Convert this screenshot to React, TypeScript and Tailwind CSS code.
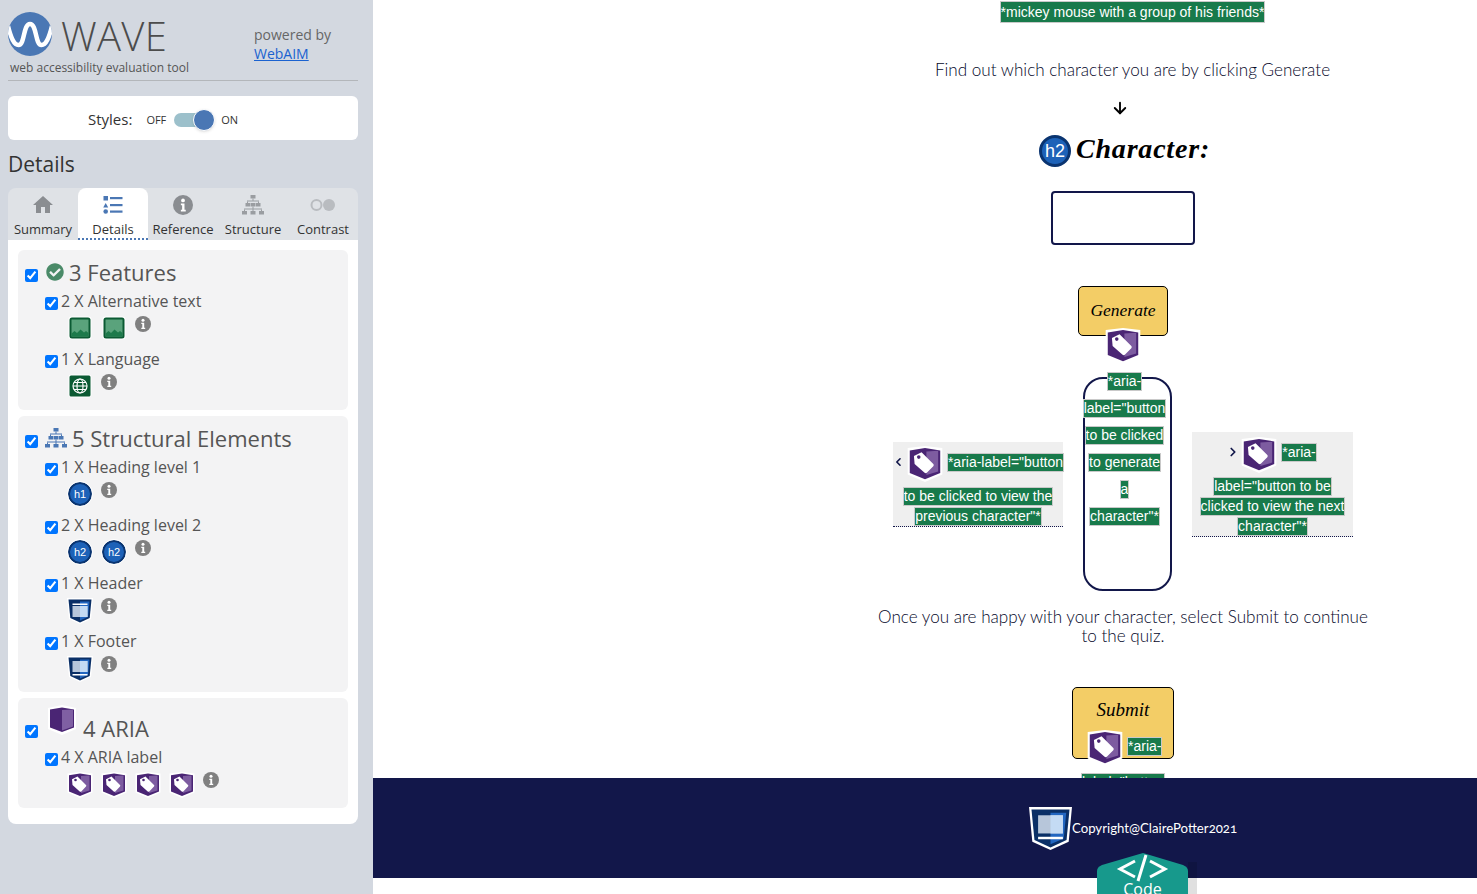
import type { ReactNode } from "react";
import { ArrowDown, ChevronLeft, ChevronRight } from "lucide-react";
import { FaCheckCircle } from "react-icons/fa";
import { MdHome } from "react-icons/md";

const ARIAL = "font-['Liberation_Sans',Arial,sans-serif]";

function AltIcon() {
  return (
    <svg width="24" height="24" viewBox="0 0 24 24">
      <rect x="0.5" y="0.5" width="23" height="23" rx="3" fill="#fff" />
      <rect x="1.5" y="1.5" width="21" height="21" rx="2.5" fill="#0b5a33" />
      <rect x="3.5" y="3.5" width="17" height="17" fill="#5aa37c" />
      <path d="M3.5 20.5v-3l3-2.5 2.5 2 3.500-3.500 3.500 3 2-1.500 2.500 2v3.500z" fill="#1d7a4b" />
    </svg>
  );
}

function LangIcon() {
  return (
    <svg width="24" height="24" viewBox="0 0 24 24">
      <rect x="0.5" y="0.5" width="23" height="23" rx="3" fill="#fff" />
      <rect x="1.5" y="1.5" width="21" height="21" rx="1.5" fill="#0b5a33" />
      <g fill="none" stroke="#fff" strokeWidth="1.2">
        <circle cx="12" cy="12" r="7" />
        <ellipse cx="12" cy="12" rx="3" ry="7" />
        <path d="M5 12h14M6 8.500h12M6 15.500h12" />
      </g>
    </svg>
  );
}

function HeadingIcon({ level, size = 24 }: { level: string; size?: number }) {
  const big = size > 24;
  return (
    <span
      className={`${ARIAL} flex shrink-0 items-center justify-center rounded-full bg-[#1d62b8] text-white ${
        big
          ? "h-[32px] w-[32px] border-[3px] border-[#0a3470] text-[18px]"
          : "h-[24px] w-[24px] border-[2px] border-[#0a3470] text-[11px] outline outline-1 outline-white"
      }`}
    >
      {level}
    </span>
  );
}

function LandmarkIcon({ footer, w = 26, h = 26 }: { footer?: boolean; w?: number; h?: number }) {
  return (
    <svg width={w} height={h} viewBox="0 0 26 26" className="shrink-0">
      <path d="M0 0h26l-2 21-11 5-11-5z" fill="#fff" />
      <path d="M1.500 1.500h23l-1.800 18.500-9.700 4.500-9.700-4.500z" fill="#0a2f66" />
      <path d="M13 3.500h9.500l-1.500 15.500-8 3.500z" fill="#2266c0" />
      <rect x="5.500" y={footer ? 5 : 8} width="15" height="11" fill="#b7c6da" />
      <rect x="13" y={footer ? 5 : 8} width="7.500" height="11" fill="#c4dbf4" />
      <rect x="5.500" y={footer ? 18 : 5.500} width="15" height="1.500" fill="#fff" />
    </svg>
  );
}

function AriaLabelIcon({ w = 26, h = 26 }: { w?: number; h?: number }) {
  return (
    <svg width={w} height={h} viewBox="0 0 26 26" className="shrink-0">
      <path d="M0.500 1.500 13 0l12.500 1.500v19L13 26 .5 20.500z" fill="#fff" />
      <path d="M2 3.200 13 1.500l11 1.700v16.300L13 24 2 19.500z" fill="#4a2574" />
      <path d="M14 4l8.500-.5v15L14 21z" fill="#7d5ca0" />
      <path d="M5 7.200 10.500 4.500l8.500 8.500a1.200 1.200 0 0 1 0 1.600l-4.700 4.800a1.200 1.200 0 0 1-1.600 0L5.500 13z" fill="#fff" />
      <circle cx="8.500" cy="8" r="1.300" fill="#4a2574" />
    </svg>
  );
}

function AriaGroupIcon() {
  return (
    <svg width="30" height="30" viewBox="0 0 30 30" className="shrink-0">
      <path d="M1 3 15 0l14 3v21l-14 6-14-6z" fill="#fff" />
      <path d="M3 4.500 15 2.500l12 2v18L15 27 3 22.500z" fill="#4a2574" />
      <path d="M15 5l11-.5v17L15 25.500z" fill="#7f5fa3" />
    </svg>
  );
}

function SitemapIcon({ className }: { className: string }) {
  return (
    <svg width="22" height="20" viewBox="0 0 22 20" fill="currentColor" className={className}>
      <rect x="8.500" y="0" width="5" height="3.500" />
      <rect x="10.500" y="3.500" width="1" height="2.500" />
      <rect x="5" y="5.500" width="12" height="1" />
      <rect x="5" y="6.500" width="1" height="1.500" />
      <rect x="16" y="6.500" width="1" height="1.500" />
      <rect x="3.500" y="8" width="4.500" height="3.500" />
      <rect x="14" y="8" width="4.500" height="3.500" />
      <rect x="8.500" y="8" width="5" height="3.500" />
      <rect x="2" y="13.500" width="18" height="1" />
      <rect x="2" y="14.500" width="1" height="1.500" />
      <rect x="10.500" y="11.500" width="1" height="4.500" />
      <rect x="19" y="14.500" width="1" height="1.500" />
      <rect x="0" y="16" width="5" height="3.500" />
      <rect x="8.500" y="16" width="5" height="3.500" />
      <rect x="17" y="16" width="5" height="3.500" />
    </svg>
  );
}

function InfoIcon({ size = 16, color = "#808080" }: { size?: number; color?: string }) {
  return (
    <svg width={size} height={size} viewBox="0 0 16 16" className="shrink-0">
      <circle cx="8" cy="8" r="8" fill={color} />
      <circle cx="8" cy="4.300" r="1.500" fill="#fff" />
      <path d="M6.300 6.800h2.900v5h1v1.300H6.300v-1.300h1v-3.700h-1z" fill="#fff" />
    </svg>
  );
}

function Check() {
  return <input type="checkbox" checked readOnly className="m-0 h-[13px] w-[13px] shrink-0" />;
}

function Item({ label, icons }: { label: string; icons: ReactNode }) {
  return (
    <div className="pl-[27px]">
      <div className="flex h-[22px] items-center gap-[3px] text-[16px] text-[#555]">
        <span className="mt-[5px] flex">
          <Check />
        </span>
        <span>{label}</span>
      </div>
      <div className="flex h-[36px] items-start pl-[23px] pt-[4px]">
        <div className="flex gap-[10px]">{icons}</div>
        <span className="ml-[9px]">
          <InfoIcon />
        </span>
      </div>
    </div>
  );
}

function ShieldSlot({ children }: { children: ReactNode }) {
  return <span className="-mx-[1px] flex">{children}</span>;
}

function Tab({ label, icon, active }: { label: string; icon: ReactNode; active?: boolean }) {
  return (
    <div
      className={`flex w-[70px] flex-col items-center rounded-t-lg pt-[5px] ${
        active ? "border-b-2 border-dotted border-[#4a77b4] bg-white" : ""
      }`}
    >
      <div className="flex h-[24px] items-center">{icon}</div>
      <span className="mt-[3px] whitespace-nowrap text-[13px] leading-[18px] text-[#333]">{label}</span>
    </div>
  );
}

function Sidebar() {
  return (
    <aside className="flex h-[894px] w-[373px] shrink-0 flex-col bg-[#d3d8e0] pl-[8px] pr-[15px] font-['Open_Sans',sans-serif]">
      <header className="flex h-[81px] border-b border-[#b3b6ba] pt-[12px]">
        <div className="w-[246px]">
          <div className="flex h-[44px] items-center gap-[9px]">
            <svg width="44" height="44" viewBox="0 0 44 44">
              <clipPath id="wave-clip">
                <circle cx="22" cy="22" r="22" />
              </clipPath>
              <circle cx="22" cy="22" r="22" fill="#4a77b4" />
              <path
                d="M0 14C3 26 6 33 10.500 33 17 33 15 12 22 12 29 12 27 33 33.500 33 38 33 41 26 44 14"
                fill="none"
                stroke="#fff"
                strokeWidth="4.500"
                clipPath="url(#wave-clip)"
              />
            </svg>
            <span className="mt-[4px] text-[40px] font-light leading-[34px] tracking-[0.3px] text-[#4c4c4c]">WAVE</span>
          </div>
          <p className="ml-[2px] mt-[3px] whitespace-nowrap text-[12px] leading-[18px] text-[#555]">
            web accessibility evaluation tool
          </p>
        </div>
        <div className="pt-[13px] text-[14px] leading-[19px] text-[#666]">
          <p>powered by</p>
          <a href="#webaim" className="text-[#1a62d0] underline">
            WebAIM
          </a>
        </div>
      </header>

      <div className="mt-[15px] flex h-[44px] items-center rounded-md bg-white pl-[80px] pt-[4px] text-[#333]">
        <span className="-mt-[1px] text-[15px]">Styles:</span>
        <span className="ml-[14px] text-[11px]">OFF</span>
        <span className="relative ml-[8px] h-[14px] w-[38px] rounded-full bg-[#9cc0cb]">
          <span className="absolute right-[-3px] top-[-4px] h-[22px] w-[22px] rounded-full border border-white bg-[#4a77b4] shadow" />
        </span>
        <span className="ml-[9px] text-[11px]">ON</span>
      </div>

      <h2 className="flex h-[48px] items-center pt-[2px] text-[21px] text-[#333]">Details</h2>

      <div className="flex h-[52px] rounded-t-lg bg-[#dfe2e6]">
        <Tab label="Summary" icon={<MdHome size={24} className="text-[#8a8d91]" />} />
        <Tab
          active
          label="Details"
          icon={
            <svg width="20" height="20" viewBox="0 0 20 20" fill="#4a77b4">
              <rect x="0.500" y="1" width="4.500" height="4.500" />
              <path d="M2.700 8l2.500 4.500H.2z" />
              <circle cx="2.700" cy="16.500" r="2.300" />
              <rect x="7" y="2" width="12.500" height="2.200" />
              <rect x="7" y="9" width="12.500" height="2.200" />
              <rect x="7" y="15.500" width="12.500" height="2.200" />
            </svg>
          }
        />
        <Tab label="Reference" icon={<InfoIcon size={20} color="#8a8d91" />} />
        <Tab label="Structure" icon={<SitemapIcon className="text-[#9a9da1]" />} />
        <Tab
          label="Contrast"
          icon={
            <svg width="26" height="14" viewBox="0 0 26 14">
              <circle cx="6.500" cy="7" r="5" fill="none" stroke="#b9bcc0" strokeWidth="2" />
              <circle cx="19" cy="7" r="6" fill="#b9bcc0" />
            </svg>
          }
        />
      </div>

      <div className="flex flex-col gap-[6px] rounded-b-lg bg-white px-[10px] pb-[16px] pt-[10px]">
        <section className="rounded-md bg-[#f3f3f4] pb-[4px]">
          <div className="flex h-[40px] items-center pl-[7px] pt-[4px]">
            <span className="mt-[6px] flex">
              <Check />
            </span>
            <FaCheckCircle size={18} className="ml-[8px] text-[#4a8a68]" />
            <h3 className="ml-[5px] text-[22px] text-[#555]">3 Features</h3>
          </div>
          <Item
            label="2 X Alternative text"
            icons={
              <>
                <AltIcon />
                <AltIcon />
              </>
            }
          />
          <Item label="1 X Language" icons={<LangIcon />} />
        </section>

        <section className="rounded-md bg-[#f3f3f4] pb-[4px]">
          <div className="flex h-[40px] items-center pl-[7px] pt-[4px]">
            <span className="mt-[6px] flex">
              <Check />
            </span>
            <SitemapIcon className="ml-[7px] text-[#4a77b4]" />
            <h3 className="ml-[5px] text-[22px] text-[#555]">5 Structural Elements</h3>
          </div>
          <Item label="1 X Heading level 1" icons={<HeadingIcon level="h1" />} />
          <Item
            label="2 X Heading level 2"
            icons={
              <>
                <HeadingIcon level="h2" />
                <HeadingIcon level="h2" />
              </>
            }
          />
          <Item
            label="1 X Header"
            icons={
              <ShieldSlot>
                <LandmarkIcon />
              </ShieldSlot>
            }
          />
          <Item
            label="1 X Footer"
            icons={
              <ShieldSlot>
                <LandmarkIcon footer />
              </ShieldSlot>
            }
          />
        </section>

        <section className="rounded-md bg-[#f3f3f4] pb-[4px]">
          <div className="flex h-[48px] items-center pl-[7px] pt-[12px]">
            <span className="mt-[6px] flex">
              <Check />
            </span>
            <span className="mb-[16px] ml-[9px]">
              <AriaGroupIcon />
            </span>
            <h3 className="ml-[6px] text-[22px] text-[#555]">4 ARIA</h3>
          </div>
          <Item
            label="4 X ARIA label"
            icons={
              <>
                <ShieldSlot>
                  <AriaLabelIcon />
                </ShieldSlot>
                <ShieldSlot>
                  <AriaLabelIcon />
                </ShieldSlot>
                <ShieldSlot>
                  <AriaLabelIcon />
                </ShieldSlot>
                <ShieldSlot>
                  <AriaLabelIcon />
                </ShieldSlot>
              </>
            }
          />
        </section>
      </div>
    </aside>
  );
}

function Hl({ children }: { children: ReactNode }) {
  return (
    <span className="block whitespace-nowrap bg-[#187a4b] text-[14px] leading-[17px] text-white outline outline-1 outline-[#c9c9c9]">
      {children}
    </span>
  );
}

function CenterLines({ lines, step }: { lines: string[]; step: string }) {
  return (
    <div className={`flex flex-col items-center ${step}`}>
      {lines.map((line, i) => (
        <div key={i} className="flex h-[17px] items-center">
          <Hl>{line}</Hl>
        </div>
      ))}
    </div>
  );
}

function Main() {
  return (
    <main className="relative flex h-[894px] min-w-0 flex-1 flex-col overflow-hidden bg-white">
      <div className={`${ARIAL} h-[778px] shrink-0 overflow-hidden`}>
        <div className="ml-[505px] flex w-[490px] flex-col items-center">
          <div className="mt-[2px] pl-[19px]">
            <span className="block whitespace-nowrap bg-[#187a4b] text-[14px] leading-[20px] text-white outline outline-1 outline-[#c9c9c9]">
              *mickey mouse with a group of his friends*
            </span>
          </div>

          <p className="mt-[38px] pl-[19px] font-['Lato',sans-serif] text-[17.1px] font-light leading-[20px] text-[#05072a]">
            Find out which character you are by clicking Generate
          </p>

          <ArrowDown size={18} strokeWidth={2.5} className="ml-[-6px] mt-[19px] text-black" />

          <div className="mt-[18px] flex items-center pl-[3px]">
            <HeadingIcon level="h2" size={32} />
            <h2 className="ml-[5px] -mt-[4px] font-['Liberation_Serif',serif] text-[28px] font-bold italic leading-[34px] tracking-[0.8px] text-black">
              Character:
            </h2>
          </div>

          <div className="mt-[24px] h-[54px] w-[144px] rounded-[4px] border-2 border-[#12174a]" />

          <div className="relative mt-[41px] flex h-[50px] w-[90px] items-center justify-center rounded-[5px] border border-black bg-[#f3cd66] font-['Liberation_Serif',serif] text-[17.5px] italic text-black">
            <span className="-mt-[2px]">Generate</span>
            <span className="absolute left-[26px] top-[40px]">
              <AriaLabelIcon w={36} h={38} />
            </span>
          </div>

          <div className="mt-[41px] flex items-center gap-[20px]">
            <div className="h-[85px] w-[170px] border-b border-dotted border-[#12174a] bg-[#efefef]">
              <div className="flex h-[40px] items-center pt-[1px]">
                <ChevronLeft size={14} strokeWidth={3} className="-ml-[1px] text-[#12174a]" />
                <span className="ml-[2px] mt-[3px]">
                  <AriaLabelIcon w={36} h={36} />
                </span>
                <span className="ml-[5px]">
                  <Hl>*aria-label="button</Hl>
                </span>
              </div>
              <CenterLines lines={["to be clicked to view the", "previous character\"*"]} step="mt-[6px] gap-[3px]" />
            </div>

            <div className="h-[214px] w-[89px] rounded-[20px] border-2 border-[#12174a] pr-[6px]">
              <CenterLines
                lines={['*aria-', 'label="button', "to be clicked", "to generate", "a", 'character"*']}
                step="mt-[-6px] gap-[10px]"
              />
            </div>

            <div className="h-[105px] w-[161px] border-b border-dotted border-[#12174a] bg-[#efefef]">
              <div className="flex h-[40px] items-center justify-center">
                <ChevronRight size={14} strokeWidth={3} className="-translate-x-[3px] text-[#12174a]" />
                <span className="ml-[-2px] mt-[6px]">
                  <AriaLabelIcon w={36} h={38} />
                </span>
                <span className="ml-[5px] mt-[2px]">
                  <Hl>*aria-</Hl>
                </span>
              </div>
              <CenterLines
                lines={['label="button to be', "clicked to view the next", 'character"*']}
                step="mt-[6px] gap-[3px]"
              />
            </div>
          </div>

          <p className="mt-[16px] text-center font-['Lato',sans-serif] text-[17.1px] font-light leading-[19px] text-[#05072a]">
            Once you are happy with your character, select Submit to continue
            <br />
            to the quiz.
          </p>

          <div className="relative mt-[42px] h-[72px] w-[102px] rounded-[5px] border border-black bg-[#f3cd66] text-center font-['Liberation_Serif',serif] text-[19px] italic text-black">
            <span className="mt-[9px] block leading-[26px]">Submit</span>
            <span className="absolute left-[14px] top-[41px] flex items-center gap-[5px] not-italic">
              <AriaLabelIcon w={36} h={38} />
              <span className={`${ARIAL} -mt-[4px] flex`}>
                <Hl>*aria-</Hl>
              </span>
            </span>
            <span className={`${ARIAL} absolute left-[9px] top-[86px] flex not-italic`}>
              <Hl>label="button</Hl>
            </span>
          </div>
        </div>
      </div>

      <footer className="flex h-[100px] shrink-0 items-center bg-[#12174a] pl-[656px]">
        <LandmarkIcon footer w={43} h={43} />
        <span className="mt-[2px] font-['Lato',sans-serif] text-[13.2px] text-white [font-variant-numeric:oldstyle-nums]">
          Copyright@ClairePotter2021
        </span>
      </footer>

      <div className="absolute left-[724px] top-[853px] h-[41px] w-[91px] shadow-[9px_9px_0_0_rgba(0,0,0,0.12)]">
        <svg width="91" height="41" viewBox="0 0 91 41" className="absolute inset-0">
          <path d="M0 18Q0 14 5 12L46 0l40 12q5 2 5 6v23H0z" fill="#17998c" />
          <g fill="none" stroke="#fff" strokeWidth="3">
            <path d="M38 8 23 16l15 8M53 8l15 8-15 8M49 2 41 28" />
          </g>
        </svg>
        <span className="absolute left-0 right-0 top-[26px] text-center font-['Open_Sans',sans-serif] text-[16px] leading-[20px] text-white">
          Code
        </span>
      </div>
    </main>
  );
}

export default function App() {
  return (
    <div className="flex h-[894px] w-full overflow-hidden">
      <Sidebar />
      <Main />
    </div>
  );
}
